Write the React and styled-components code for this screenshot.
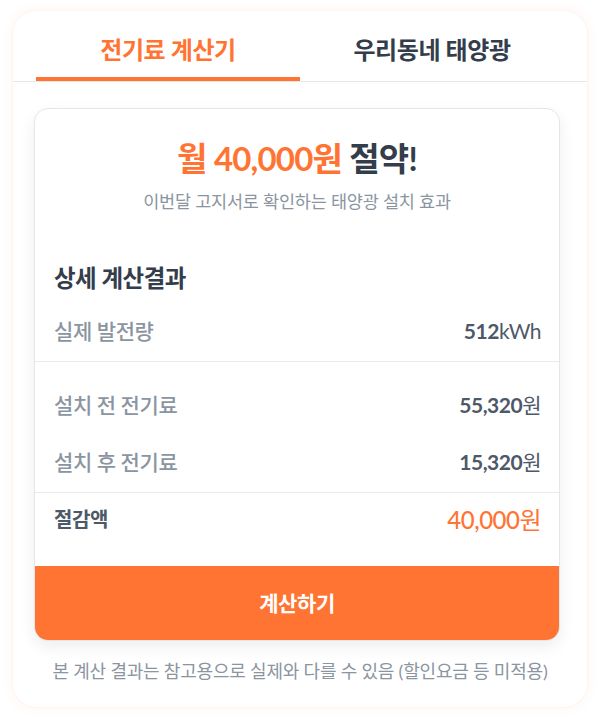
import React, { useState } from "react";
import styled, { createGlobalStyle } from "styled-components";

const ORANGE = "#ff7433";

const Global = createGlobalStyle`
  html, body { margin: 0; padding: 0; background: #ffffff; }
  body { font-family: Lato, "Noto Sans CJK KR", "Noto Sans", sans-serif; -webkit-font-smoothing: antialiased; }
  * { box-sizing: border-box; }
`;

const Page = styled.div`
  padding: 10px 12px 13px;
`;

const Shell = styled.div`
  background: #fff;
  border-radius: 24px;
  border: 1px solid #fff4ee;
  box-shadow: 0 0 10px 2px rgba(255, 120, 60, 0.06);
  padding-bottom: 25px;
  overflow: hidden;
`;

const TabBar = styled.div`
  display: grid;
  grid-template-columns: 1fr 1fr;
  padding: 0 23px;
  border-bottom: 1px solid #e5e8eb;
`;

const Tab = styled.button`
  all: unset;
  cursor: pointer;
  text-align: center;
  padding: 25px 0 13px;
  font-size: 24px;
  line-height: 28px;
  font-weight: 700;
  letter-spacing: -0.4px;
  color: ${(p) => (p.$active ? ORANGE : "#333d4b")};
  border-bottom: 4px solid ${(p) => (p.$active ? ORANGE : "transparent")};
`;

const Body = styled.div`
  padding: 26px 27px 0 21px;
`;

const Card = styled.div`
  border: 1px solid #e3e6ea;
  border-radius: 14px;
  overflow: hidden;
  background: #fff;
  box-shadow: 0 6px 16px rgba(0, 0, 0, 0.07);
`;

const Summary = styled.div`
  padding: 32px 20px 40px;
  text-align: center;
`;

const Headline = styled.div`
  font-size: 33px;
  line-height: 34px;
  font-weight: 700;
  letter-spacing: -0.8px;
  color: #333d4b;
`;

const Accent = styled.span`
  color: ${ORANGE};
`;

const Sub = styled.div`
  margin-top: 16px;
  font-size: 17.5px;
  line-height: 22px;
  color: #8b95a1;
  letter-spacing: -0.2px;
`;

const Group = styled.div`
  padding: ${(p) => p.$pad};
  border-top: ${(p) => (p.$divided ? "1px solid #e8eaee" : "none")};
`;

const DetailTitle = styled.div`
  font-size: 23.5px;
  line-height: 28px;
  font-weight: 700;
  color: #333d4b;
  letter-spacing: -0.5px;
  margin-bottom: 10px;
`;

const Row = styled.div`
  display: flex;
  justify-content: space-between;
  align-items: center;
  padding: ${(p) => (p.$total ? "14px 0 18px" : "16px 0")};
  line-height: 25px;
`;

const Label = styled.span`
  font-size: ${(p) => (p.$strong ? "20px" : "21px")};
  font-weight: ${(p) => (p.$strong ? 700 : 500)};
  color: ${(p) => (p.$strong ? "#4e5968" : "#8b95a1")};
  letter-spacing: -0.4px;
`;

const Value = styled.span`
  font-size: ${(p) => (p.$total ? "24px" : "21px")};
  color: ${(p) => (p.$total ? ORANGE : "#4e5968")};
  letter-spacing: -0.5px;
`;

const Num = styled.b`
  font-weight: ${(p) => (p.$light ? 500 : 700)};
`;

const CalcButton = styled.button`
  all: unset;
  display: block;
  width: 100%;
  height: 74px;
  line-height: 74px;
  text-align: center;
  background: ${ORANGE};
  color: #fff;
  font-size: 21px;
  font-weight: 700;
  letter-spacing: -0.4px;
  cursor: pointer;
`;

const Note = styled.p`
  margin: 19px 0 0;
  text-align: center;
  font-size: 18px;
  line-height: 22px;
  color: #8b95a1;
  letter-spacing: -0.2px;
  padding-left: 6px;
`;

export default function App() {
  const [tab, setTab] = useState(0);
  return (
    <>
      <Global />
      <Page>
        <Shell>
          <TabBar>
            <Tab $active={tab === 0} onClick={() => setTab(0)}>전기료 계산기</Tab>
            <Tab $active={tab === 1} onClick={() => setTab(1)}>우리동네 태양광</Tab>
          </TabBar>
          <Body>
            <Card>
              <Summary>
                <Headline>
                  <Accent>월 40,000원</Accent> 절약!
                </Headline>
                <Sub>이번달 고지서로 확인하는 태양광 설치 효과</Sub>
              </Summary>
              <Group $pad="11px 18px 2px 19px">
                <DetailTitle>상세 계산결과</DetailTitle>
                <Row>
                  <Label>실제 발전량</Label>
                  <Value><Num>512</Num>kWh</Value>
                </Row>
              </Group>
              <Group $divided $pad="14px 18px 2px 19px">
                <Row>
                  <Label>설치 전 전기료</Label>
                  <Value><Num>55,320</Num>원</Value>
                </Row>
                <Row>
                  <Label>설치 후 전기료</Label>
                  <Value><Num>15,320</Num>원</Value>
                </Row>
              </Group>
              <Group $divided $pad="0 18px 16px 19px">
                <Row $total>
                  <Label $strong>절감액</Label>
                  <Value $total><Num $light>40,000</Num>원</Value>
                </Row>
              </Group>
              <CalcButton>계산하기</CalcButton>
            </Card>
            <Note>본 계산 결과는 참고용으로 실제와 다를 수 있음 (할인요금 등 미적용)</Note>
          </Body>
        </Shell>
      </Page>
    </>
  );
}
